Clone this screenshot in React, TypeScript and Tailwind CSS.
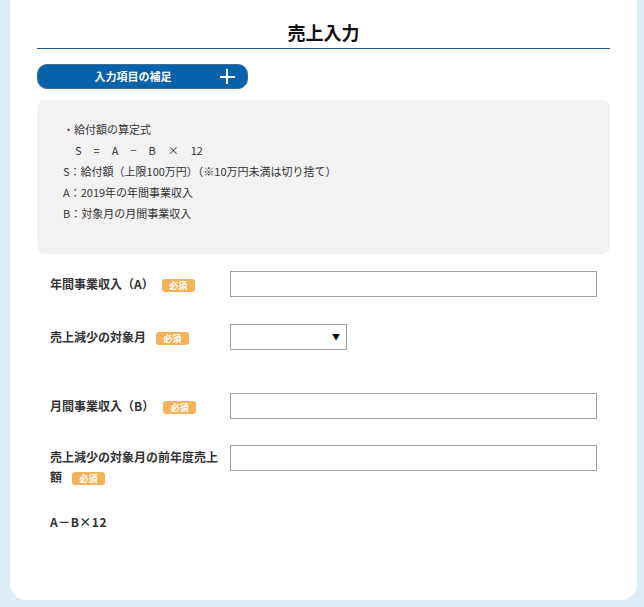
import React from "react";

const Badge = () => (
  <span className="inline-flex items-center justify-center w-[33px] h-[13px] rounded-[3px] bg-[#f2b35b] text-white text-[9px] font-bold leading-none">
    必須
  </span>
);

export default function App() {
  const font = { fontFamily: '"Noto Sans CJK JP", "Noto Sans", sans-serif' };
  return (
    <div className="w-[644px] h-[607px] bg-[#dcedf8] overflow-hidden" style={font}>
      <div className="ml-[10px] w-[627px] h-[600px] bg-white rounded-b-[16px] px-[27px]">
        <div className="pt-[20px] pb-[4px] border-b border-[#1d5a8e] text-center text-[18px] leading-[24px] font-bold text-[#111]">
          売上入力
        </div>
        <button className="mt-[15px] relative flex items-center w-[211px] h-[25px] rounded-[10px] bg-[#0862a9] border border-[#3d6f99] text-white">
          <span className="w-[190px] text-center text-[11px] font-bold leading-none">入力項目の補足</span>
          <span className="absolute right-[12px] top-[4px] w-[15px] h-[15px]">
            <span className="absolute left-[6px] top-0 w-[2px] h-[15px] bg-white" />
            <span className="absolute left-0 top-[6.5px] w-[15px] h-[2px] bg-white" />
          </span>
        </button>
        <div className="mt-[11px] h-[154px] rounded-[8px] bg-[#f2f2f2] pl-[26px] pt-[19px] text-[11px] leading-[21px] text-[#333]">
          <div>・給付額の算定式</div>
          <div className="pl-[12px] flex gap-[12px]">
            <span>S</span>
            <span>=</span>
            <span>A</span>
            <span>−</span>
            <span>B</span>
            <span>×</span>
            <span>12</span>
          </div>
          <div>S：給付額（上限100万円）（※10万円未満は切り捨て）</div>
          <div>A：2019年の年間事業収入</div>
          <div>B：対象月の月間事業収入</div>
        </div>
        <div className="px-[13px] text-[12px] text-[#333]">
          <div className="mt-[17px] flex items-center h-[26px]">
            <div className="w-[180px] flex items-center font-bold">
              <span>年間事業収入（A）</span>
              <span className="ml-[8px]"><Badge /></span>
            </div>
            <div className="w-[367px] h-[26px] border border-[#a0a0a0] bg-white" />
          </div>
          <div className="mt-[27px] flex items-center h-[26px]">
            <div className="w-[180px] flex items-center font-bold">
              <span>売上減少の対象月</span>
              <span className="ml-[10px]"><Badge /></span>
            </div>
            <div className="w-[117px] h-[26px] border border-[#a0a0a0] bg-white flex items-center justify-end pr-[6px] text-[8px] text-black">
              ▼
            </div>
          </div>
          <div className="mt-[43px] flex items-center h-[26px]">
            <div className="w-[180px] flex items-center font-bold">
              <span>月間事業収入（B）</span>
              <span className="ml-[9px]"><Badge /></span>
            </div>
            <div className="w-[367px] h-[26px] border border-[#a0a0a0] bg-white" />
          </div>
          <div className="mt-[26px] flex items-start">
            <div className="w-[180px] pr-[10px] font-bold leading-[20px] mt-[2px]">
              <div>売上減少の対象月の前年度売上</div>
              <div className="flex items-center">
                <span>額</span>
                <span className="ml-[10px]"><Badge /></span>
              </div>
            </div>
            <div className="w-[367px] h-[26px] border border-[#a0a0a0] bg-white" />
          </div>
          <div className="mt-[25px] font-bold leading-[20px] tracking-[0.5px]">A－B×12</div>
        </div>
      </div>
    </div>
  );
}
